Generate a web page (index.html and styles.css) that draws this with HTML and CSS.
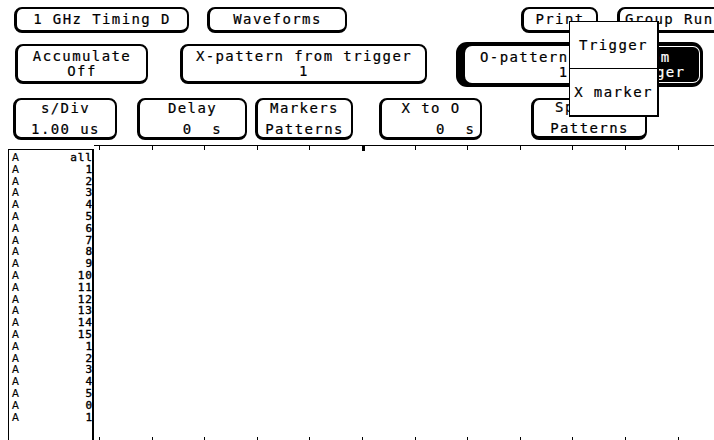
FILE: index.html
```html
<!DOCTYPE html>
<html>
<head>
<meta charset="utf-8">
<link rel="stylesheet" href="styles.css">
</head>
<body>
<div class="screen">
  <div class="row r1">
    <div class="btn b-ghz">1 GHz Timing D</div>
    <div class="btn b-wave">Waveforms</div>
    <div class="btn b-print">Print</div>
    <div class="btn b-group">Group Run</div>
  </div>
  <div class="row r2">
    <div class="btn two b-acc">Accumulate
Off</div>
    <div class="btn two b-xpat">X-pattern from trigger
1</div>
    <div class="opat">
      <div class="opat-left">O-pattern
        1</div>
      <div class="opat-right">from
Trigger</div>
    </div>
  </div>
  <div class="row r3">
    <div class="btn tall b-sdiv">s/Div
1.00 us</div>
    <div class="btn tall b-delay">Delay
  0  s</div>
    <div class="btn tall b-mark">Markers
Patterns</div>
    <div class="btn tall b-xo">X to O
     0  s</div>
    <div class="btn tall b-spec">Specify
Patterns</div>
  </div>
  <div class="chart">
    <div class="labels">
      <div class="lab"><span>A</span><span class="num">all</span></div>
      <div class="lab"><span>A</span><span class="num">1</span></div>
      <div class="lab"><span>A</span><span class="num">2</span></div>
      <div class="lab"><span>A</span><span class="num">3</span></div>
      <div class="lab"><span>A</span><span class="num">4</span></div>
      <div class="lab"><span>A</span><span class="num">5</span></div>
      <div class="lab"><span>A</span><span class="num">6</span></div>
      <div class="lab"><span>A</span><span class="num">7</span></div>
      <div class="lab"><span>A</span><span class="num">8</span></div>
      <div class="lab"><span>A</span><span class="num">9</span></div>
      <div class="lab"><span>A</span><span class="num">10</span></div>
      <div class="lab"><span>A</span><span class="num">11</span></div>
      <div class="lab"><span>A</span><span class="num">12</span></div>
      <div class="lab"><span>A</span><span class="num">13</span></div>
      <div class="lab"><span>A</span><span class="num">14</span></div>
      <div class="lab"><span>A</span><span class="num">15</span></div>
      <div class="lab"><span>A</span><span class="num">1</span></div>
      <div class="lab"><span>A</span><span class="num">2</span></div>
      <div class="lab"><span>A</span><span class="num">3</span></div>
      <div class="lab"><span>A</span><span class="num">4</span></div>
      <div class="lab"><span>A</span><span class="num">5</span></div>
      <div class="lab"><span>A</span><span class="num">0</span></div>
      <div class="lab"><span>A</span><span class="num">1</span></div>
    </div>
    <div class="plot"></div>
  </div>
  <div class="popup">
    <div class="pop-item">Trigger</div>
    <div class="pop-item">X marker</div>
  </div>
</div>
</body>
</html>
```
FILE: styles.css
```css
html, body {
  margin: 0;
  padding: 0;
  background: #fff;
}
.screen {
  position: relative;
  width: 714px;
  height: 440px;
  overflow: hidden;
  background: #fff;
  color: #000;
  font-family: "DejaVu Sans Mono", "Liberation Mono", monospace;
  font-size: 14px;
  -webkit-text-stroke: 0.2px #000;
}
.row {
  display: flex;
  align-items: flex-start;
}
.r1 {
  padding-top: 7px;
  height: 26px;
}
.r2 {
  margin-top: 11px;
  height: 40px;
}
.r3 {
  margin-top: 14px;
  height: 42px;
}
.btn {
  box-sizing: border-box;
  flex: none;
  display: flex;
  align-items: center;
  justify-content: center;
  text-align: center;
  border: 2px solid #000;
  border-left-width: 3px;
  border-bottom-width: 3px;
  border-radius: 8px;
  background: #fff;
  font-size: 14px;
  line-height: 15px;
  letter-spacing: 1.4px;
  white-space: pre;
}
.r1 .btn { height: 26px; }
.two { height: 40px; }
.tall { height: 42px; line-height: 21px; }

.b-ghz { margin-left: 14px; width: 175px; }
.b-wave { margin-left: 18px; width: 140px; }
.b-print { margin-left: 174px; width: 77px; }
.b-group { margin-left: 19px; width: 110px; justify-content: flex-start; padding-left: 5px; }

.b-acc { margin-left: 15px; width: 133px; }
.b-xpat { margin-left: 32px; width: 247px; }

.opat {
  box-sizing: border-box;
  flex: none;
  margin-left: 29px;
  margin-top: -2px;
  width: 247px;
  height: 45px;
  background: #000;
  border-radius: 11px;
  padding: 4px 3px 4px 9px;
  display: flex;
}
.opat-left, .opat-right {
  display: flex;
  align-items: center;
  white-space: pre;
  line-height: 15px;
  letter-spacing: 1.4px;
}
.opat-left {
  width: 138px;
  box-sizing: border-box;
  padding-left: 15px;
  background: #fff;
  color: #000;
  border-radius: 7px 0 0 7px;
}
.opat-right {
  flex: 1;
  justify-content: center;
  text-align: center;
  box-sizing: border-box;
  background: #000;
  color: #fff;
  -webkit-text-stroke: 0.2px #fff;
  border: 1px solid #fff;
  border-left: none;
  border-radius: 0 7px 7px 0;
}

.b-sdiv { margin-left: 13px; width: 104px; }
.b-delay { margin-left: 20px; width: 110px; }
.b-mark { margin-left: 8px; width: 98px; }
.b-xo { margin-left: 26px; width: 103px; }
.b-spec { margin-left: 49px; width: 116px; border-bottom-width: 4px; }

.chart {
  display: flex;
  margin-top: 5px;
  height: 295px;
  padding-left: 8px;
}
.labels {
  box-sizing: border-box;
  width: 86px;
  margin-top: 4px;
  border-left: 1px solid #000;
  border-top: 1px solid #000;
  border-right: 2px solid #000;
  padding: 2px 0 0 3px;
  font-family: "DejaVu Sans", sans-serif;
}
.lab {
  display: flex;
  justify-content: space-between;
  align-items: center;
  height: 11.8px;
  line-height: 11.8px;
  font-size: 10px;
}
.num {
  font-family: "DejaVu Sans Mono", monospace;
  font-size: 11px;
  line-height: 11.8px;
  letter-spacing: 1px;
  margin-right: -1px;
  -webkit-text-stroke: 0.4px #000;
}
.plot {
  position: relative;
  flex: 1;
  border-top: 1px solid #000;
  background-image:
    repeating-linear-gradient(to right, #000 0 1px, transparent 1px 52.6px),
    repeating-linear-gradient(to right, #000 0 1px, transparent 1px 52.6px);
  background-size: calc(100% - 5px) 4px, calc(100% - 5px) 3px;
  background-position: 5px 0, 5px 100%;
  background-repeat: no-repeat;
}
.plot::after {
  content: "";
  position: absolute;
  left: 268px;
  top: 0;
  width: 3px;
  height: 5px;
  background: #000;
}

.popup {
  position: absolute;
  left: 569px;
  top: 21px;
  width: 90px;
  height: 96px;
  box-sizing: border-box;
  background: #fff;
  border: 1px solid #000;
  border-right-width: 2px;
  border-bottom-width: 2px;
  display: flex;
  flex-direction: column;
}
.pop-item {
  flex: 1;
  display: flex;
  align-items: center;
  justify-content: center;
  letter-spacing: 1.4px;
  white-space: pre;
}
.pop-item + .pop-item {
  border-top: 1px solid #000;
}
```
